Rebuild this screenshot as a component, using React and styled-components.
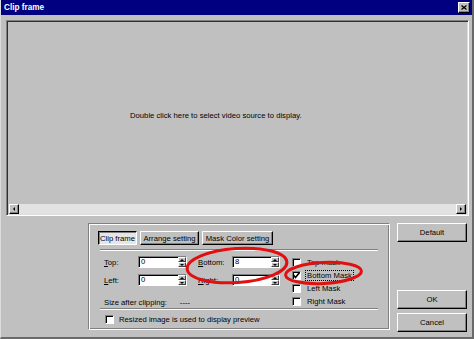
import React from 'react'
import styled, { createGlobalStyle, css } from 'styled-components'

const GlobalStyle = createGlobalStyle`
  html, body { margin: 0; padding: 0; background: #c0c0c0; }
  body { font-family: "Liberation Sans", Arial, sans-serif; font-size: 7.7px; color: #000; }
`

const raised = css`
  border: 1px solid;
  border-color: #fff #000 #000 #fff;
  box-shadow: inset -1px -1px #808080;
`

const sunken = css`
  border: 1px solid;
  border-color: #808080 #fff #fff #808080;
  box-shadow: inset 1px 1px #000;
`

const Window = styled.div`
  position: relative;
  width: 474px;
  height: 339px;
  box-sizing: border-box;
  border-left: 1px solid #dcdcdc;
  border-right: 2px solid #6a6a6a;
  border-bottom: 2px solid #6a6a6a;
  background: #c0c0c0;
  display: flex;
  flex-direction: column;
`

const TitleBar = styled.div`
  height: 15px;
  background: #000080;
  display: flex;
  align-items: center;
  justify-content: space-between;
  padding: 0 2px 0 3px;
`

const TitleText = styled.span`
  color: #fff;
  font-weight: bold;
  font-size: 8.2px;
`

const CloseBtn = styled.div`
  ${raised};
  width: 10px;
  height: 9px;
  background: #c0c0c0;
  display: flex;
  align-items: center;
  justify-content: center;
`

const Body = styled.div`
  flex: 1;
  padding: 5px 3px 0 5px;
  display: flex;
  flex-direction: column;
`

const Preview = styled.div`
  height: 196px;
  box-sizing: border-box;
  border: 1px solid;
  border-color: #808080 #fff #fff #808080;
  box-shadow: inset 1px 1px #303030, inset -1px -1px #dcdcdc;
  display: flex;
  flex-direction: column;
  padding: 2px 2px 1px 2px;
`

const Display = styled.div`
  flex: 1;
  display: flex;
  align-items: center;
  padding-left: 121px;
  padding-top: 3px;
`

const ScrollBar = styled.div`
  height: 10px;
  background: #e2e2e2;
  display: flex;
  justify-content: space-between;
`

const ArrowBtn = styled.div`
  ${raised};
  box-sizing: border-box;
  width: 10px;
  height: 10px;
  background: #c0c0c0;
  display: flex;
  align-items: center;
  justify-content: center;
`

const Lower = styled.div`
  display: flex;
  margin-top: 7px;
`

const Panel = styled.div`
  margin-left: 82px;
  width: 302px;
  height: 107px;
  box-sizing: border-box;
  border: 1px solid;
  border-color: #808080 #fff #fff #808080;
  box-shadow: inset 1px 1px #fff, inset -1px -1px #808080;
  padding: 7px 11px 0 9px;
`

const Tabs = styled.div`
  display: flex;
  gap: 3px;
  height: 14px;
`

const Tab = styled.div`
  width: ${p => p.w}px;
  box-sizing: border-box;
  display: flex;
  align-items: center;
  justify-content: center;
  ${p => p.active ? css`
    border: 1px solid;
    border-color: #000 #fff #fff #000;
    box-shadow: inset 1px 1px #808080;
    background: #e6e6e6;
  ` : raised};
`

const Separator = styled.div`
  height: 0;
  border-top: 1px solid #808080;
  border-bottom: 1px solid #fff;
  margin: ${p => p.m || '4px 0 0 2px'};
`

const Main = styled.div`
  display: flex;
  margin-top: 5px;
`

const Fields = styled.div`
  margin-left: 6px;
`

const FieldGrid = styled.div`
  display: grid;
  grid-template-columns: 34px 49px 11px 34px 48px;
  grid-auto-rows: 12px;
  row-gap: 6px;
  align-items: center;
`

const Label = styled.span`
  white-space: nowrap;
  grid-column: ${p => p.col};
  u { text-decoration: underline; }
`

const Spin = styled.div`
  ${sunken};
  box-sizing: border-box;
  height: 12px;
  background: #fff;
  display: flex;
  align-items: stretch;
  grid-column: ${p => p.col};
`

const SpinValue = styled.span`
  flex: 1;
  padding-left: 2px;
  line-height: 10px;
`

const SpinButtons = styled.div`
  width: 8px;
  display: flex;
  flex-direction: column;
  background: #c0c0c0;
`

const SpinBtn = styled.div`
  flex: 1;
  box-sizing: border-box;
  border: 1px solid;
  border-color: #fff #404040 #404040 #fff;
  display: flex;
  align-items: center;
  justify-content: center;
`

const SizeRow = styled.div`
  display: flex;
  margin-top: 11px;
  height: 10px;
  align-items: center;
`

const SizeValue = styled.span`
  margin-left: 13px;
`

const Checks = styled.div`
  margin-left: 12px;
  display: flex;
  flex-direction: column;
`

const CheckRow = styled.label`
  display: flex;
  align-items: center;
  gap: 5px;
  height: 13px;
  white-space: nowrap;
`

const Box = styled.span`
  ${sunken};
  box-sizing: border-box;
  width: 9px;
  height: 9px;
  background: #fff;
  display: flex;
  align-items: center;
  justify-content: center;
`

const CheckText = styled.span`
  padding: 0 1px;
  outline: ${p => p.focus ? '1px dotted #000' : 'none'};
`

const FootRow = styled.div`
  display: flex;
  align-items: center;
  gap: 5px;
  margin: 4px 0 0 7px;
  height: 10px;
`

const Buttons = styled.div`
  margin-left: 7px;
  width: 70px;
  display: flex;
  flex-direction: column;
`

const Button = styled.div`
  ${raised};
  box-sizing: border-box;
  height: 19px;
  display: flex;
  align-items: center;
  justify-content: center;
  margin-top: ${p => p.mt || 0}px;
`

const Overlay = styled.svg`
  position: absolute;
  left: -1px;
  top: 0;
  pointer-events: none;
`

const Tri = ({ dir, size = 3 }) => {
  const pts = {
    up: `0,${size} ${size},0 ${size * 2},${size}`,
    down: `0,0 ${size},${size} ${size * 2},0`,
    left: `${size},0 0,${size} ${size},${size * 2}`,
    right: `0,0 ${size},${size} 0,${size * 2}`,
  }[dir]
  const vertical = dir === 'up' || dir === 'down'
  return (
    <svg width={vertical ? size * 2 : size} height={vertical ? size : size * 2}>
      <polygon points={pts} fill="#000" />
    </svg>
  )
}

const Spinner = ({ value, col }) => (
  <Spin col={col}>
    <SpinValue>{value}</SpinValue>
    <SpinButtons>
      <SpinBtn><Tri dir="up" size={2} /></SpinBtn>
      <SpinBtn><Tri dir="down" size={2} /></SpinBtn>
    </SpinButtons>
  </Spin>
)

const Check = ({ checked }) => (
  <Box>
    {checked && (
      <svg width="7" height="7" viewBox="0 0 7 7">
        <polyline points="0.5,3 2.5,5.5 6.5,0.5" fill="none" stroke="#000" strokeWidth="1.6" />
      </svg>
    )}
  </Box>
)

export default function App() {
  return (
    <>
      <GlobalStyle />
      <Window>
        <TitleBar>
          <TitleText>Clip frame</TitleText>
          <CloseBtn>
            <svg width="6" height="5" viewBox="0 0 6 5">
              <path d="M0.5 0.5 L5.5 4.5 M5.5 0.5 L0.5 4.5" stroke="#000" strokeWidth="1.3" />
            </svg>
          </CloseBtn>
        </TitleBar>
        <Body>
          <Preview>
            <Display>Double click here to select video source to display.</Display>
            <ScrollBar>
              <ArrowBtn><Tri dir="left" size={2} /></ArrowBtn>
              <ArrowBtn><Tri dir="right" size={2} /></ArrowBtn>
            </ScrollBar>
          </Preview>
          <Lower>
            <Panel>
              <Tabs>
                <Tab w={39} active>Clip frame</Tab>
                <Tab w={59}>Arrange setting</Tab>
                <Tab w={71}>Mask Color setting</Tab>
              </Tabs>
              <Separator />
              <Main>
                <Fields>
                  <FieldGrid>
                    <Label col={1}><u>T</u>op:</Label>
                    <Spinner col={2} value="0" />
                    <Label col={4}><u>B</u>ottom:</Label>
                    <Spinner col={5} value="8" />
                    <Label col={1}><u>L</u>eft:</Label>
                    <Spinner col={2} value="0" />
                    <Label col={4}><u>R</u>ight:</Label>
                    <Spinner col={5} value="0" />
                  </FieldGrid>
                  <SizeRow>
                    <span>Size after clipping:</span>
                    <SizeValue>----</SizeValue>
                  </SizeRow>
                </Fields>
                <Checks>
                  <CheckRow><Check /><CheckText>Top mask</CheckText></CheckRow>
                  <CheckRow><Check checked /><CheckText focus>Bottom Mask</CheckText></CheckRow>
                  <CheckRow><Check /><CheckText>Left Mask</CheckText></CheckRow>
                  <CheckRow><Check /><CheckText>Right Mask</CheckText></CheckRow>
                </Checks>
              </Main>
              <Separator m="0 0 0 2px" />
              <FootRow>
                <Check />
                <span>Resized image is used to display preview</span>
              </FootRow>
            </Panel>
            <Buttons>
              <Button>Default</Button>
              <Button mt={48}>OK</Button>
              <Button mt={4}>Cancel</Button>
            </Buttons>
          </Lower>
        </Body>
        <Overlay width="474" height="339">
          <ellipse cx="237" cy="265.5" rx="50" ry="17" fill="none" stroke="#e01010" strokeWidth="3" transform="rotate(-4 237 265.5)" />
          <ellipse cx="323.5" cy="273" rx="38" ry="10.5" fill="none" stroke="#e01010" strokeWidth="3" transform="rotate(-3 323.5 273)" />
        </Overlay>
      </Window>
    </>
  )
}
